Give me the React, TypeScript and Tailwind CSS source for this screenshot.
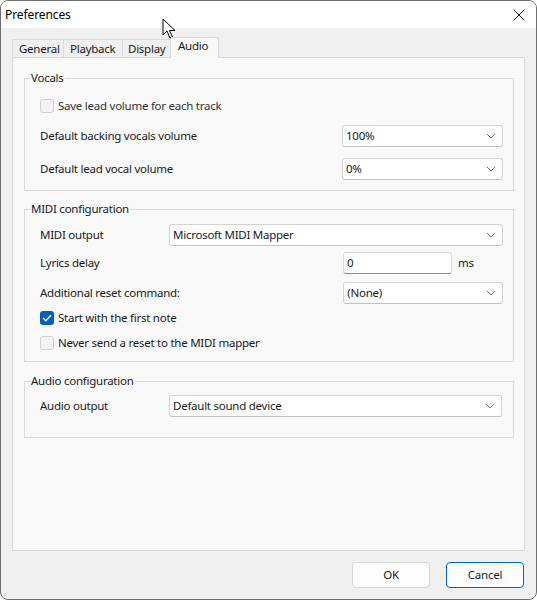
import React from 'react';

const font = { fontFamily: '"Noto Sans", "Open Sans", sans-serif' };

function Chevron() {
  return (
    <svg width="10" height="6" viewBox="0 0 10 6" className="shrink-0">
      <path d="M1 1 L5 5 L9 1" fill="none" stroke="#6b6b6b" strokeWidth="1" />
    </svg>
  );
}

function Select({ value, className }: { value: string; className: string }) {
  return (
    <div
      className={`h-[22px] flex items-center justify-between pl-[3px] pr-[6px] bg-white border border-[#d4d4d4] border-b-[#c2c2c2] rounded-[3px] ${className}`}
    >
      <span>{value}</span>
      <Chevron />
    </div>
  );
}

function CheckBox({ checked, label }: { checked?: boolean; label: string }) {
  return (
    <div className="h-[20px] flex items-center">
      {checked ? (
        <div className="w-[14px] h-[14px] rounded-[3px] bg-[#005fb8] flex items-center justify-center">
          <svg width="10" height="8" viewBox="0 0 10 8">
            <path d="M1 4 L3.8 6.8 L9 1.2" fill="none" stroke="#ffffff" strokeWidth="1.4" />
          </svg>
        </div>
      ) : (
        <div className="w-[14px] h-[14px] rounded-[3px] bg-[#f3f3f3] border border-[#d0d0d0]" />
      )}
      <span className="ml-[4px]">{label}</span>
    </div>
  );
}

function Group({ title, className, children }: { title: string; className: string; children: React.ReactNode }) {
  return (
    <div className={`relative border border-[#dcdcdc] ${className}`}>
      <span className="absolute left-[6px] top-[-10px] bg-[#f9f9f9] pr-[1px] leading-[18px]">{title}</span>
      {children}
    </div>
  );
}

export default function App() {
  return (
    <div
      style={font}
      className="relative w-[537px] h-[600px] bg-[#f0f0f0] border border-[#6f6f6f] rounded-[8px] overflow-hidden text-[11.5px] tracking-[-0.25px] text-[#1a1a1a] leading-none"
    >
      {/* Title bar */}
      <div className="h-[27px] bg-white flex items-center justify-between pl-[4px] pr-[11px]">
        <span className="text-[12px] tracking-[-0.1px] text-black">Preferences</span>
        <svg width="12" height="12" viewBox="0 0 12 12">
          <path d="M0.5 0.5 L11.5 11.5 M11.5 0.5 L0.5 11.5" stroke="#1a1a1a" strokeWidth="1" />
        </svg>
      </div>

      {/* Tabs */}
      <div className="h-[29px] pl-[11px] flex items-end">
        <div className="w-[52px] h-[18px] pl-[6px] flex items-center border border-b-0 border-[#dadada] bg-[#f0f0f0]">General</div>
        <div className="w-[59px] h-[18px] pl-[6px] flex items-center border border-l-0 border-b-0 border-[#dadada] bg-[#f0f0f0]">Playback</div>
        <div className="w-[48px] h-[18px] pl-[5px] flex items-center border border-l-0 border-b-0 border-[#dadada] bg-[#f0f0f0]">Display</div>
        <div className="w-[48px] h-[21px] pl-[7px] pb-[4px] flex items-center border border-l-0 border-b-0 border-[#dadada] bg-[#f9f9f9] relative top-[1px] z-10">Audio</div>
      </div>

      {/* Panel */}
      <div className="ml-[11px] w-[513px] h-[494px] bg-[#f9f9f9] border border-[#dadada] pl-[11px] pr-[10px] pt-[20px]">
        <Group title="Vocals" className="h-[113px] pl-[15px] pr-[10px] pt-[17px]">
          <div className="text-[#333333]">
            <CheckBox label="Save lead volume for each track" />
          </div>
          <div className="mt-[9px] flex items-center justify-between">
            <span>Default backing vocals volume</span>
            <Select value="100%" className="w-[161px]" />
          </div>
          <div className="mt-[11px] flex items-center justify-between">
            <span>Default lead vocal volume</span>
            <Select value="0%" className="w-[161px]" />
          </div>
        </Group>

        <Group title="MIDI configuration" className="mt-[18px] h-[153px] pl-[15px] pr-[10px] pt-[14px]">
          <div className="flex items-center">
            <span className="w-[129px]">MIDI output</span>
            <Select value="Microsoft MIDI Mapper" className="flex-1" />
          </div>
          <div className="mt-[6px] flex items-center">
            <span className="w-[303px]">Lyrics delay</span>
            <div className="w-[109px] h-[22px] bg-white border border-[#dcdcdc] border-b-[#8a8a8a] rounded-[3px] flex items-center pl-[3px]">0</div>
            <span className="ml-[6px]">ms</span>
          </div>
          <div className="mt-[8px] flex items-center">
            <span className="w-[304px]">Additional reset command:</span>
            <Select value="(None)" className="w-[160px]" />
          </div>
          <div className="mt-[4px]">
            <CheckBox checked label="Start with the first note" />
          </div>
          <div className="mt-[5px]">
            <CheckBox label="Never send a reset to the MIDI mapper" />
          </div>
        </Group>

        <Group title="Audio configuration" className="mt-[19px] h-[57px] pl-[15px] pr-[11px] pt-[13px]">
          <div className="flex items-center">
            <span className="w-[129px]">Audio output</span>
            <Select value="Default sound device" className="flex-1" />
          </div>
        </Group>
      </div>

      {/* Buttons */}
      <div className="mt-[11px] pr-[12px] flex justify-end gap-[16px]">
        <div className="w-[78px] h-[26px] flex items-center justify-center bg-[#fdfdfd] border border-[#d6d6d6] rounded-[4px]">OK</div>
        <div className="w-[78px] h-[26px] flex items-center justify-center bg-[#fdfdfd] border border-[#0067c0] rounded-[4px] shadow-[inset_0_0_0_1px_#ffffff]">Cancel</div>
      </div>

      {/* Mouse pointer */}
      <svg className="absolute left-[161px] top-[17px]" width="16" height="22" viewBox="0 0 16 22">
        <path d="M1 1 L1 17 L5 13 L8 20 L10.5 19 L7.5 12.5 L13 12.5 Z" fill="#ffffff" stroke="#000000" strokeWidth="1" strokeLinejoin="round" />
      </svg>
    </div>
  );
}
